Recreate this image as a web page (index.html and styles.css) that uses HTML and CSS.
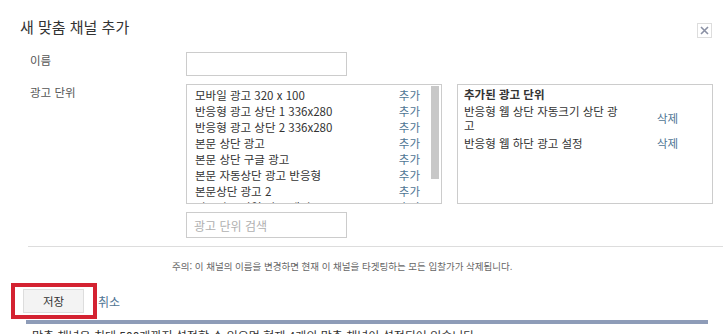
FILE: index.html
```html
<!DOCTYPE html>
<html lang="ko">
<head>
    <meta charset="UTF-8">
    <meta name="viewport" content="width=device-width, initial-scale=1.0">
    <title>새 맞춤 채널 추가</title>
    <link rel="stylesheet" href="styles.css">
</head>
<body>
    <div class="header">
        <h1>새 맞춤 채널 추가</h1>
        <span class="close">
            <svg width="9" height="9" viewBox="0 0 9 9"><path d="M1 1L8 8M8 1L1 8" stroke="#8a90a4" stroke-width="1.6"/></svg>
        </span>
    </div>

    <div class="form">
        <div class="row">
            <label>이름</label>
            <div class="field"><input type="text" class="text-input"></div>
        </div>
        <div class="row">
            <label>광고 단위</label>
            <div class="field">
                <div class="lists">
                    <div class="list">
                        <div class="items">
                            <div class="item"><span>모바일 광고 320 x 100</span><a>추가</a></div>
                            <div class="item"><span>반응형 광고 상단 1 336x280</span><a>추가</a></div>
                            <div class="item"><span>반응형 광고 상단 2 336x280</span><a>추가</a></div>
                            <div class="item"><span>본문 상단 광고</span><a>추가</a></div>
                            <div class="item"><span>본문 상단 구글 광고</span><a>추가</a></div>
                            <div class="item"><span>본문 자동상단 광고 반응형</span><a>추가</a></div>
                            <div class="item"><span>본문상단 광고 2</span><a>추가</a></div>
                            <div class="item"><span>전국의 모바일 광고 배너 300</span><a>추가</a></div>
                        </div>
                        <div class="scroll"><div class="thumb"></div></div>
                    </div>
                    <div class="added">
                        <div class="added-title">추가된 광고 단위</div>
                        <div class="added-item"><span>반응형 웹 상단 자동크기 상단 광고</span><a>삭제</a></div>
                        <div class="added-item"><span>반응형 웹 하단 광고 설정</span><a>삭제</a></div>
                    </div>
                </div>
                <input type="text" class="text-input search" placeholder="광고 단위 검색">
            </div>
        </div>
    </div>

    <div class="divider"></div>
    <p class="notice">주의: 이 채널의 이름을 변경하면 현재 이 채널을 타겟팅하는 모든 입찰가가 삭제됩니다.</p>

    <div class="footer">
        <div class="highlight"><button>저장</button></div>
        <a class="cancel">취소</a>
    </div>
    <div class="bar"></div>
    <p class="summary">맞춤 채널은 최대 500개까지 설정할 수 있으며 현재 4개의 맞춤 채널이 설정되어 있습니다.</p>
</body>
</html>
```

FILE: styles.css
```css
body {
    margin: 0;
    font-family: "Noto Sans CJK KR", "Noto Sans", sans-serif;
    color: #444;
    background: #fff;
    overflow: hidden;
}
a {
    color: #4f7594;
    cursor: pointer;
}
.header {
    display: flex;
    justify-content: space-between;
    align-items: center;
    padding: 17px 16px 0 20px;
    height: 20px;
}
h1 {
    margin: 0;
    font-size: 15px;
    font-weight: normal;
    line-height: 20px;
    color: #333;
}
.close {
    display: flex;
    align-items: center;
    justify-content: center;
    width: 13px;
    height: 13px;
    border: 1px solid #ddd;
    margin-top: 6px;
}
.form {
    padding: 15px 0 0 30px;
}
.row {
    display: grid;
    grid-template-columns: 156px 1fr;
    margin-bottom: 8px;
}
label {
    font-size: 11.5px;
    line-height: 16px;
    color: #555;
}
.text-input {
    display: block;
    box-sizing: border-box;
    width: 161px;
    height: 24px;
    margin: 0;
    border: 1px solid #ccc;
    font-family: inherit;
    font-size: 12px;
    padding: 0 7px;
}
.text-input::placeholder {
    color: #b0b0b0;
}
.search {
    height: 26px;
    margin-top: 8px;
}
.lists {
    display: flex;
    gap: 15px;
}
.list {
    display: flex;
    box-sizing: border-box;
    width: 256px;
    height: 120px;
    border: 1px solid #ccc;
    overflow: hidden;
}
.items {
    flex: 1;
    padding: 2px 11px 0 8px;
}
.item {
    display: flex;
    justify-content: space-between;
    font-size: 11.5px;
    line-height: 16px;
    color: #333;
    white-space: nowrap;
}
.scroll {
    width: 8px;
    margin: 1px 2px 0 0;
}
.thumb {
    height: 93px;
    background: #c8c8c8;
}
.added {
    box-sizing: border-box;
    width: 256px;
    height: 120px;
    border: 1px solid #ccc;
    padding: 1px 6px;
}
.added-title {
    font-size: 11.5px;
    font-weight: bold;
    line-height: 16px;
    color: #333;
}
.added-item {
    display: flex;
    align-items: center;
    padding: 2px 0;
    font-size: 11.5px;
    line-height: 14px;
    color: #333;
}
.added-item span {
    width: 160px;
    margin-right: 33px;
}
.divider {
    margin: 0 5px 0 28px;
    border-top: 1px solid #ddd;
}
.notice {
    margin: 12px 0 0 172px;
    font-size: 9.5px;
    line-height: 14px;
    color: #666;
}
.footer {
    display: flex;
    align-items: center;
    margin: 10px 0 0 11px;
}
.highlight {
    border: 4px solid #d42231;
    padding: 2px 9px 2px 8px;
}
button {
    display: block;
    width: 61px;
    height: 24px;
    border: 1px solid #ddd;
    background: #f3f3f3;
    font-family: inherit;
    font-size: 11.5px;
    color: #333;
    padding: 0;
}
.cancel {
    margin-left: 1px;
    font-size: 12px;
}
.bar {
    height: 4px;
    margin: 1px 20px 0 26px;
    background: #8e9cb8;
}
.summary {
    margin: 4px 0 0 32px;
    font-size: 12px;
    line-height: 16px;
    color: #333;
}
```
